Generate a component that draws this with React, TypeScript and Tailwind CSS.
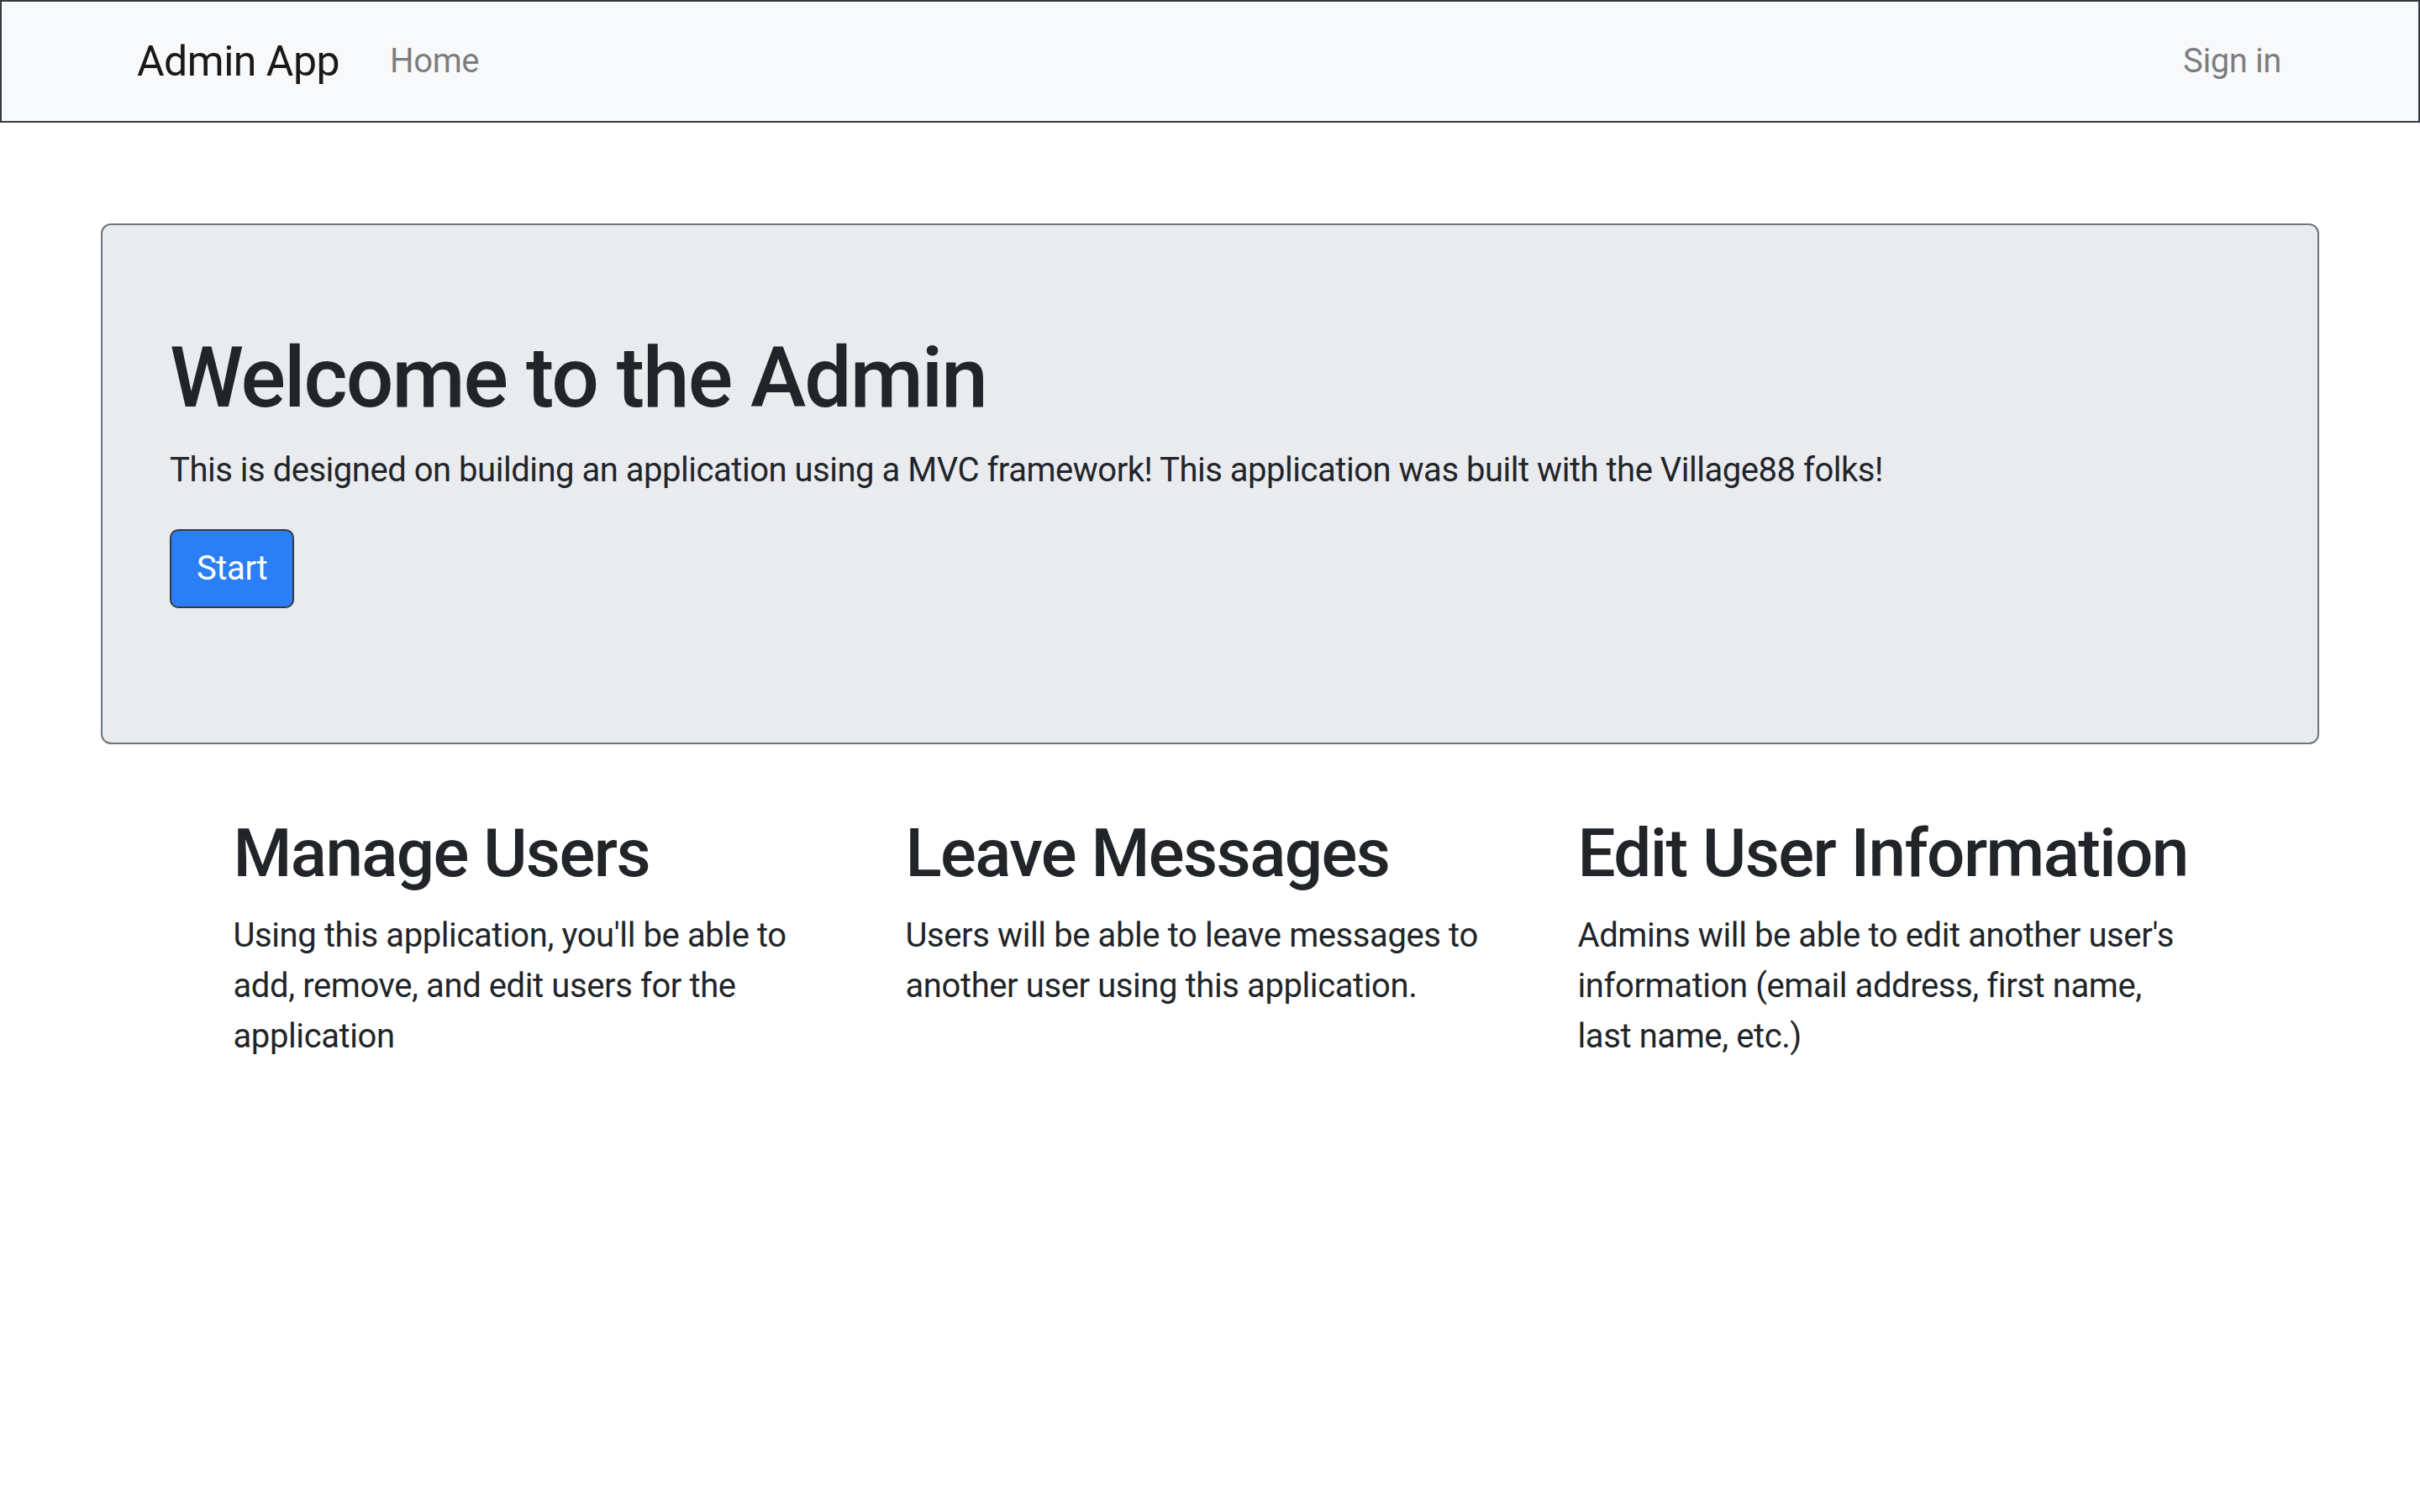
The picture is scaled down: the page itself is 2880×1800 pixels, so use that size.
import React from 'react';

const features = [
  {
    title: 'Manage Users',
    text: "Using this application, you'll be able to add, remove, and edit users for the application",
  },
  {
    title: 'Leave Messages',
    text: 'Users will be able to leave messages to another user using this application.',
  },
  {
    title: 'Edit User Information',
    text: "Admins will be able to edit another user's information (email address, first name, last name, etc.)",
  },
];

const App = () => {
  return (
    <div className="min-h-screen bg-white font-['Roboto','Liberation_Sans',sans-serif] text-[#212529]">
      <nav className="flex h-[146px] items-center border-2 border-[#343a40] bg-[#f8f9fa] pl-[161px] pr-[143px]">
        <a href="#" className="mr-[40px] py-[12px] text-[50px] leading-[75px] tracking-[-0.01em] text-black/90">
          Admin App
        </a>
        <a href="#" className="px-[20px] text-[40px] leading-[60px] tracking-[-0.01em] text-black/50">
          Home
        </a>
        <a href="#" className="ml-auto px-[20px] text-[40px] leading-[60px] tracking-[-0.01em] text-black/50">
          Sign in
        </a>
      </nav>

      <div className="mx-[120px] mt-[120px] mb-[80px] rounded-[12px] border-2 border-[#6c757d] bg-[#e9ebef] px-[80px] pt-[122px] pb-[120px]">
        <h1 className="mb-[20px] text-[100px] font-medium leading-[1.2] tracking-[-0.02em]">Welcome to the Admin</h1>
        <p className="mb-[40px] text-[40px] leading-[60px] tracking-[-0.012em]">
          This is designed on building an application using a MVC framework! This application was built with the
          Village88 folks!
        </p>
        <p className="mb-[40px]">
          <button
            type="button"
            className="rounded-[10px] border-2 border-[#343a40] bg-[#2b7ff6] px-[30px] py-[15px] text-[40px] leading-[60px] tracking-[-0.01em] text-white"
          >
            Start
          </button>
        </p>
      </div>

      <div className="mx-auto grid w-[2400px] grid-cols-3 pt-[2px]">
        {features.map((f) => (
          <div key={f.title} className="px-[37.5px]">
            <h2 className="mb-[20px] whitespace-nowrap text-[80px] font-medium leading-[1.2] tracking-[-0.02em]">
              {f.title}
            </h2>
            <p className="mb-[40px] text-[40px] leading-[60px] tracking-[-0.01em]">{f.text}</p>
          </div>
        ))}
      </div>
    </div>
  );
};

export default App;
